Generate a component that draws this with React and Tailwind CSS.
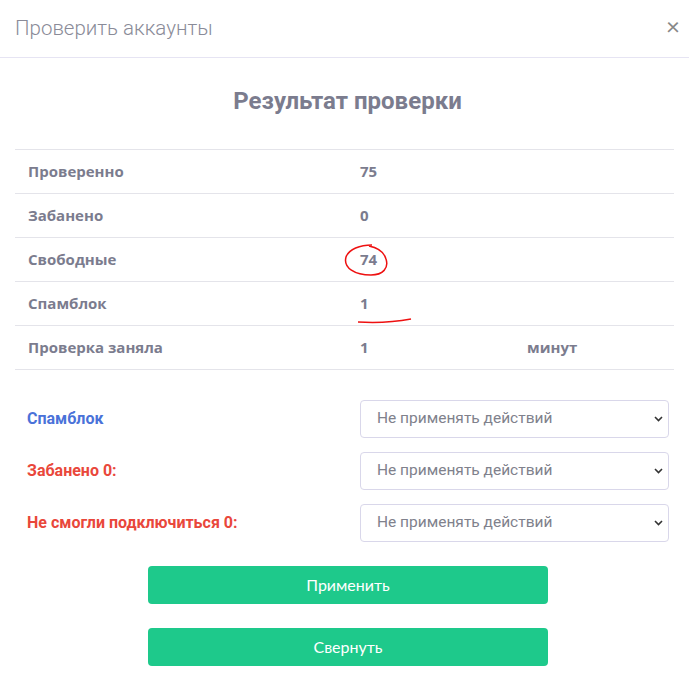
import React from 'react';

const rows = [
  { label: 'Проверенно', value: '75' },
  { label: 'Забанено', value: '0' },
  { label: 'Свободные', value: '74' },
  { label: 'Спамблок', value: '1' },
];

const actions = [
  { label: 'Спамблок', color: 'text-[#4a72d9]' },
  { label: 'Забанено 0:', color: 'text-[#e9473b]' },
  { label: 'Не смогли подключиться 0:', color: 'text-[#e9473b]' },
];

const Chevron = () => (
  <svg className="absolute right-[5px] top-1/2 -translate-y-1/2" width="9" height="6" viewBox="0 0 9 6">
    <path d="M1 1l3.5 3.5L8 1" fill="none" stroke="#333" strokeWidth="1.6" />
  </svg>
);

const App = () => {
  return (
    <div className="relative w-[689px] h-[698px] bg-white text-[#7b7c8e]" style={{ fontFamily: 'Lato, "Open Sans", sans-serif' }}>
      {/* header */}
      <div className="flex items-center justify-between h-[58px] pl-[15px] pr-[9px] border-b border-[#e6e4f3]">
        <span className="text-[20.5px] font-light text-[#8a8b98]" style={{ fontFamily: 'Roboto, sans-serif' }}>Проверить аккаунты</span>
        <span className="text-[24px] leading-none text-[#888] -mt-[6px]">×</span>
      </div>

      <h2 className="text-center text-[24px] font-bold mt-[25px] mb-[30px] pl-[6px] text-[#7b7c8e]" style={{ fontFamily: 'Roboto, sans-serif' }}>
        Результат проверки
      </h2>

      {/* result table */}
      <div className="mx-[15px] border-t border-[#e4e4ea]" style={{ fontFamily: '"Open Sans", sans-serif' }}>
        {rows.map((r) => (
          <div key={r.label} className="flex h-[44px] items-center border-b border-[#e4e4ea] text-[15px] font-bold">
            <div className="w-[333px] pl-[13px]">{r.label}</div>
            <div className="pl-[12px]">{r.value}</div>
          </div>
        ))}
        <div className="flex h-[44px] items-center border-b border-[#e4e4ea] text-[15px] font-bold">
          <div className="w-[333px] pl-[13px]">Проверка заняла</div>
          <div className="w-[167px] pl-[12px]">1</div>
          <div className="pl-[12px]">минут</div>
        </div>
      </div>

      {/* hand-drawn marks */}
      <svg className="absolute left-0 top-0 pointer-events-none" width="689" height="698">
        <path d="M372 245 C360 245 349 249 346 257 C343 268 355 275 371 275 C383 275 389 268 386 259 C384 252 379 248 369 246" fill="none" stroke="#ee1111" strokeWidth="1.5" />
        <path d="M358 322 C375 323 395 322 411 319" fill="none" stroke="#ee1111" strokeWidth="1.5" />
      </svg>

      {/* actions */}
      <div className="mt-[30px] flex flex-col gap-[14px]">
        {actions.map((a) => (
          <div key={a.label} className="flex items-center">
            <div className={`w-[360px] pl-[27px] text-[16px] font-bold ${a.color}`} style={{ fontFamily: 'Roboto, sans-serif' }}>{a.label}</div>
            <div className="relative w-[309px] h-[38px] border border-[#d9d7ea] rounded-[4px] flex items-center pl-[16px] text-[15.5px] text-[#80818c]" style={{ fontFamily: 'Roboto, sans-serif' }}>
              Не применять действий
              <Chevron />
            </div>
          </div>
        ))}
      </div>

      {/* buttons */}
      <div className="mt-[24px] pl-[7px] flex flex-col items-center gap-[24px]">
        <button className="w-[400px] h-[38px] rounded-[4px] bg-[#1ec98b] text-white text-[16px]">Применить</button>
        <button className="w-[400px] h-[38px] rounded-[4px] bg-[#1ec98b] text-white text-[16px]">Свернуть</button>
      </div>
    </div>
  );
};

export default App;
